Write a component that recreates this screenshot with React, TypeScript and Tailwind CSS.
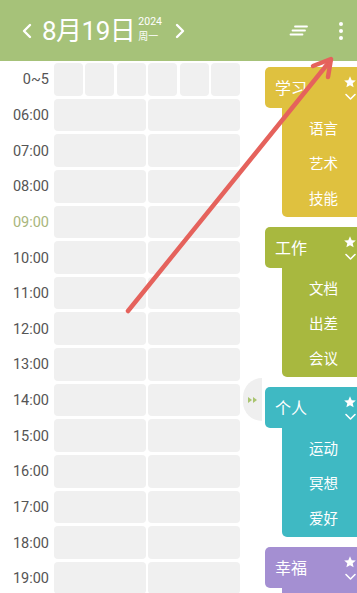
import React from "react";

const times = ["0~5","06:00","07:00","08:00","09:00","10:00","11:00","12:00","13:00","14:00","15:00","16:00","17:00","18:00","19:00"];

const cats = [
  { name: "学习", bg: "bg-[#dfc13f]", items: ["语言","艺术","技能"] },
  { name: "工作", bg: "bg-[#a8b83f]", items: ["文档","出差","会议"] },
  { name: "个人", bg: "bg-[#3fb9c3]", items: ["运动","冥想","爱好"] },
  { name: "幸福", bg: "bg-[#a48fd2]", items: ["a","b","c"] },
];

function Star() {
  return (
    <svg width="14" height="14" viewBox="0 0 24 24" fill="white">
      <path d="M12 2l2.9 6.9 7.1.6-5.4 4.7 1.6 7-6.2-3.8-6.2 3.8 1.6-7L2 9.5l7.1-.6z" />
    </svg>
  );
}

function Chev() {
  return (
    <svg width="13" height="9" viewBox="0 0 13 9" fill="none" stroke="white" strokeWidth="1.6" strokeLinecap="round" strokeLinejoin="round">
      <path d="M2 2.5l4.5 4.5 4.5-4.5" />
    </svg>
  );
}

export default function App() {
  const font = { fontFamily: 'Roboto, "Noto Sans CJK SC", sans-serif' };
  return (
    <div className="relative w-[357px] h-[593px] overflow-hidden bg-white" style={font}>
      {/* header */}
      <div className="h-[61px] bg-[#a6c279] flex items-center text-white">
        <div className="flex items-center pl-[21px]">
          <svg width="12" height="16" viewBox="0 0 12 16" fill="none" stroke="white" strokeWidth="2.4" strokeLinecap="round" strokeLinejoin="round">
            <path d="M9 2L3 8l6 6" />
          </svg>
          <span className="ml-[9px] text-[26px] leading-none tracking-[-0.5px]">8月19日</span>
          <div className="ml-[3px] flex flex-col leading-none mt-[-2px]">
            <span className="text-[10.5px]">2024</span>
            <span className="text-[10px] mt-[4px]">周一</span>
          </div>
          <svg className="ml-[12px]" width="12" height="16" viewBox="0 0 12 16" fill="none" stroke="white" strokeWidth="2.4" strokeLinecap="round" strokeLinejoin="round">
            <path d="M3 2l6 6-6 6" />
          </svg>
        </div>
        <div className="ml-auto flex items-center">
          <svg width="20" height="12" viewBox="0 0 20 12" fill="none" stroke="white" strokeWidth="1.8" strokeLinecap="round">
            <path d="M6 1.5h12" />
            <path d="M3.5 5.5h12.5" />
            <path d="M1.5 9.5h12" />
          </svg>
          <div className="ml-[30px] mr-[14px] flex flex-col items-center gap-[3px]">
            <div className="w-[4px] h-[4px] rounded-full bg-white" />
            <div className="w-[4px] h-[4px] rounded-full bg-white" />
            <div className="w-[4px] h-[4px] rounded-full bg-white" />
          </div>
        </div>
      </div>

      {/* body */}
      <div className="flex">
        <div className="w-[240px] shrink-0 pt-[2px] flex flex-col gap-[3px]">
          {times.map((t, i) => (
            <div key={t} className="flex h-[32.64px]">
              <div className={`w-[54px] shrink-0 pr-[5px] pt-[2px] flex items-center justify-end text-[14.5px] ${i === 4 ? "text-[#a9b67c]" : "text-[#555555]"}`}>{t}</div>
              {i === 0 ? (
                <div className="flex-1 flex gap-[2.5px]">
                  {[0,1,2,3,4,5].map((k) => (
                    <div key={k} className="flex-1 rounded-[4px] bg-[#f0f0f0]" />
                  ))}
                </div>
              ) : (
                <div className="flex-1 flex gap-[2px]">
                  <div className="flex-1 rounded-[4px] bg-[#f0f0f0]" />
                  <div className="flex-1 rounded-[4px] bg-[#f0f0f0]" />
                </div>
              )}
            </div>
          ))}
        </div>

        <div className="w-[25px] shrink-0 flex flex-col pt-[317px]">
          <div className="ml-[3px] w-[19px] h-[43px] bg-[#efefef] rounded-l-full flex items-center justify-center">
            <svg width="10" height="6" viewBox="0 0 10 6" fill="#a9c46f">
              <path d="M0 0l4 3-4 3z" />
              <path d="M5 0l4 3-4 3z" />
            </svg>
          </div>
        </div>

        <div className="w-[100px] shrink-0 pt-[6px] flex flex-col gap-[10px]">
          {cats.map((c) => (
            <div key={c.name} className="flex flex-col h-[150px] shrink-0">
              <div className={`${c.bg} h-[45px] rounded-[5px] rounded-br-none flex items-center pl-[10px] text-white`}>
                <span className="text-[16px] pt-[3px]">{c.name}</span>
                <div className="ml-auto mr-[8px] flex flex-col items-center gap-[3px]">
                  <Star />
                  <Chev />
                </div>
              </div>
              <div className={`${c.bg} ml-[17px] flex-1 rounded-b-[5px] pt-[4px] flex flex-col text-white text-[14.5px]`}>
                {c.items.map((it) => (
                  <div key={it} className="h-[35px] flex items-center justify-center">{c.name === "幸福" ? "" : it}</div>
                ))}
              </div>
            </div>
          ))}
        </div>
      </div>

      {/* annotation arrow */}
      <svg className="absolute left-0 top-0 pointer-events-none" width="357" height="593" viewBox="0 0 357 593" fill="none">
        <g stroke="#e5625c" strokeWidth="4.5" strokeLinecap="round" strokeLinejoin="round">
          <path d="M128 311L330 61" />
          <path d="M313 66L331 59L328 77" />
        </g>
      </svg>
    </div>
  );
}
